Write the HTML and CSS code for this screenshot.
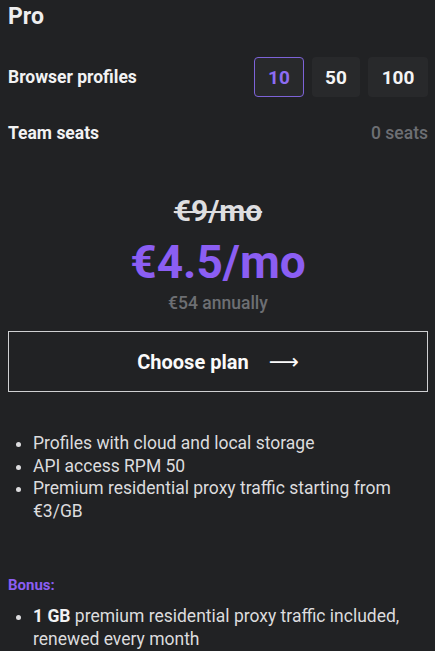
FILE: index.html
```html
<!DOCTYPE html>
<html>
<head>
<meta charset="utf-8">
<link rel="stylesheet" href="styles.css">
</head>
<body>
<div class="card">
  <h1 class="title">Pro</h1>
  <div class="row profiles">
    <span class="label">Browser profiles</span>
    <div class="options">
      <span class="opt selected">10</span>
      <span class="opt">50</span>
      <span class="opt wide">100</span>
    </div>
  </div>
  <div class="row seats">
    <span class="label">Team seats</span>
    <span class="muted">0 seats</span>
  </div>
  <div class="pricing">
    <div class="old">€9/mo</div>
    <div class="price">€4.5/mo</div>
    <div class="annual">€54 annually</div>
  </div>
  <button class="choose">Choose plan <span class="arrow">⟶</span></button>
  <ul class="features">
    <li>Profiles with cloud and local storage</li>
    <li>API access RPM 50</li>
    <li>Premium residential proxy traffic starting from €3/GB</li>
  </ul>
  <div class="bonus">Bonus:</div>
  <ul class="features bonus-list">
    <li><b>1 GB</b> premium residential proxy traffic included, renewed every month</li>
  </ul>
</div>
</body>
</html>
```
FILE: styles.css
```css
html, body {
  margin: 0;
  padding: 0;
  background: #212224;
}
body {
  font-family: Roboto, "Liberation Sans", sans-serif;
  color: #e8e8ea;
}
.card {
  padding: 0 7px 0 8px;
}
.title {
  margin: 0;
  padding-top: 2px;
  font-size: 23px;
  line-height: 30px;
  font-weight: 700;
  color: #eeeeef;
}
.row {
  display: flex;
  align-items: center;
  justify-content: space-between;
}
.profiles {
  margin-top: 25px;
}
.label {
  font-size: 17.5px;
  line-height: 20px;
  font-weight: 700;
  color: #f2f2f3;
}
.options {
  display: flex;
  gap: 8px;
}
.opt {
  width: 48px;
  height: 40px;
  box-sizing: border-box;
  display: flex;
  align-items: center;
  justify-content: center;
  background: #28292b;
  border-radius: 4px;
  font-size: 19px;
  font-weight: 700;
  color: #f4f4f5;
}
.opt.wide {
  width: 60px;
}
.opt.selected {
  width: 50px;
  border: 1px solid #7d63d8;
  color: #8d6cf2;
}
.seats {
  margin-top: 26px;
}
.muted {
  font-size: 17.5px;
  line-height: 20px;
  font-weight: 500;
  color: #6d6f73;
}
.pricing {
  text-align: center;
  margin-top: 50px;
}
.old {
  font-size: 30px;
  font-weight: 700;
  color: #dedee0;
  text-decoration: line-through;
  text-decoration-thickness: 2px;
  line-height: 36px;
}
.price {
  font-size: 46px;
  font-weight: 700;
  color: #8b5ef3;
  line-height: 50px;
  margin-top: 8px;
}
.annual {
  font-size: 17.5px;
  font-weight: 500;
  color: #6d6f73;
  line-height: 22px;
  margin-top: 5px;
}
.choose {
  display: flex;
  align-items: center;
  justify-content: center;
  gap: 20px;
  width: 100%;
  height: 61px;
  margin-top: 17px;
  background: transparent;
  border: 1.5px solid #cfd0d2;
  color: #fafafa;
  font-family: inherit;
  font-size: 20px;
  font-weight: 700;
  cursor: pointer;
}
.arrow {
  font-size: 21px;
  font-weight: 400;
  font-family: "DejaVu Sans", sans-serif;
}
.features {
  margin: 40px 0 0 0;
  padding-left: 25px;
  font-size: 17.5px;
  line-height: 22.5px;
  color: #dcdcde;
}
.features b {
  color: #f2f2f3;
}
.bonus {
  margin-top: 54px;
  font-size: 15px;
  line-height: 18px;
  font-weight: 700;
  color: #8b5ef3;
}
.bonus-list {
  margin-top: 11px;
}
```
